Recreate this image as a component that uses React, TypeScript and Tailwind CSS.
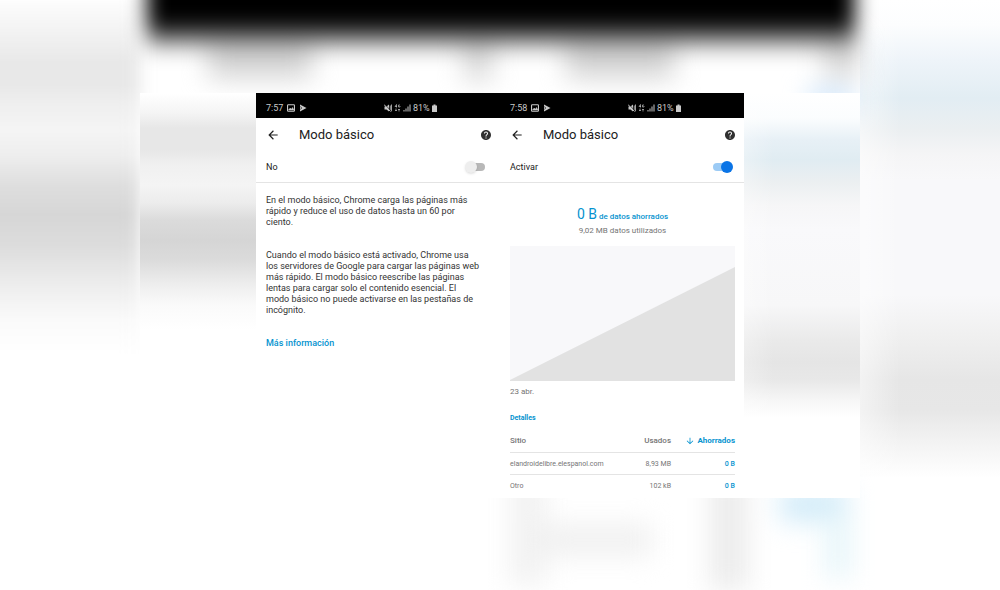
import type { ReactNode } from "react";
import { MdArrowBack, MdArrowDownward, MdHelp } from "react-icons/md";

type Stop = [number, string];

const leftEdge: Stop[] = [
  [0, "#fdfdfd"], [30, "#f3f3f3"], [62, "#e8e8e8"], [85, "#e8e8e8"], [105, "#efefef"], [130, "#f4f4f4"],
  [155, "#eeeeee"], [185, "#dedede"], [215, "#d6d6d6"], [245, "#dcdcdc"], [285, "#ededed"], [320, "#fafafa"], [355, "#ffffff"],
];
const leftPanel: Stop[] = [
  [93, "#ffffff"], [112, "#f5f5f5"], [128, "#e7e7e7"], [150, "#e7e7e7"], [165, "#f0f0f0"], [185, "#f4f4f4"],
  [203, "#ececec"], [220, "#dbdbdb"], [240, "#d5d5d5"], [260, "#dbdbdb"], [285, "#eeeeee"], [305, "#fafafa"], [330, "#ffffff"],
];
const rightEdge: Stop[] = [
  [0, "#ffffff"], [25, "#fcfdfe"], [60, "#eef4f9"], [98, "#e2edf3"], [130, "#ebeff1"], [155, "#f5f5f6"], [180, "#f8f8fa"],
  [295, "#f8f8fa"], [335, "#f0f0f0"], [380, "#e6e6e6"], [410, "#e7e7e7"], [440, "#f2f2f2"], [478, "#ffffff"],
];
const rightPanel: Stop[] = [
  [93, "#ffffff"], [118, "#fbfdfe"], [140, "#e7f0f6"], [160, "#e0ecf2"], [182, "#ebeff1"], [205, "#f6f6f7"], [230, "#f9f9fb"],
  [305, "#f7f7f8"], [340, "#eaeaea"], [362, "#e5e5e5"], [380, "#e8e8e8"], [400, "#f6f6f6"], [418, "#ffffff"],
];

function VerticalFade({ id, stops }: { id: string; stops: Stop[] }) {
  return (
    <linearGradient id={id} gradientUnits="userSpaceOnUse" x1="0" y1="0" x2="0" y2="590">
      {stops.map(([y, color]) => (
        <stop key={y} offset={y / 590} stopColor={color} />
      ))}
    </linearGradient>
  );
}

function Backdrop() {
  return (
    <svg aria-hidden="true" className="absolute inset-0 h-full w-full" viewBox="0 0 1000 590" preserveAspectRatio="none">
      <defs>
        <VerticalFade id="leftEdge" stops={leftEdge} />
        <VerticalFade id="leftPanel" stops={leftPanel} />
        <VerticalFade id="rightEdge" stops={rightEdge} />
        <VerticalFade id="rightPanel" stops={rightPanel} />
        <linearGradient id="sideFade">
          <stop offset="0" stopColor="#fff" />
          <stop offset="1" stopColor="#fff" stopOpacity="0" />
        </linearGradient>
        <filter id="soft" filterUnits="userSpaceOnUse" x="-60" y="-80" width="1120" height="740" colorInterpolationFilters="sRGB">
          <feGaussianBlur stdDeviation="13" />
        </filter>
        <filter id="edge" filterUnits="userSpaceOnUse" x="-60" y="-80" width="1120" height="740" colorInterpolationFilters="sRGB">
          <feGaussianBlur stdDeviation="8 1" />
        </filter>
        <filter id="bar" filterUnits="userSpaceOnUse" x="60" y="-140" width="880" height="300" colorInterpolationFilters="sRGB">
          <feGaussianBlur stdDeviation="10 14" />
        </filter>
      </defs>
      <rect width="1000" height="590" fill="#fff" />
      <rect x="-40" y="0" width="180" height="590" fill="url(#leftEdge)" filter="url(#edge)" />
      <rect x="860" y="0" width="140" height="590" fill="url(#rightEdge)" />
      <rect x="860" y="0" width="40" height="590" fill="url(#sideFade)" opacity="0.5" />
      <g filter="url(#soft)">
        <rect x="208" y="40" width="104" height="38" fill="#d4d4d4" />
        <rect x="464" y="40" width="28" height="40" fill="#d8d8d8" />
        <rect x="566" y="40" width="108" height="38" fill="#d4d4d4" />
        <rect x="824" y="40" width="34" height="38" fill="#d8d8d8" />
        <rect x="808" y="90" width="46" height="16" fill="#c4e0fb" />
        <rect x="510" y="470" width="36" height="115" fill="#f2f2f2" />
        <rect x="530" y="523" width="122" height="34" fill="#f1f1f1" />
        <rect x="710" y="470" width="38" height="120" fill="#ececec" />
        <rect x="780" y="488" width="68" height="34" fill="#d3ecf9" />
        <rect x="824" y="512" width="28" height="66" fill="#e8f6fa" />
      </g>
      <rect x="147" y="-120" width="708" height="158" fill="#000" filter="url(#bar)" />
      <rect x="140" y="93" width="720" height="405" fill="#fff" />
      <rect x="140" y="93" width="116" height="405" fill="url(#leftPanel)" />
      <rect x="744" y="93" width="116" height="405" fill="url(#rightPanel)" />
      <rect x="744" y="93" width="30" height="405" fill="url(#sideFade)" opacity="0.3" />
    </svg>
  );
}

function StatusBar({ time }: { time: string }) {
  return (
    <div className="flex h-[25px] items-center bg-black pt-1 pl-2.5 text-[9px] leading-3 text-[#c9c9c9]">
      <div className="flex w-[118px] items-center gap-1">
        <span>{time}</span>
        <svg className="size-2" viewBox="0 0 16 16" fill="none" stroke="currentColor" strokeWidth="2.2" aria-hidden="true">
          <rect x="1.1" y="1.5" width="13.8" height="13" rx="1.5" />
          <path d="M3 12l3.5-4 2.5 2.5L11 7l3 5z" fill="currentColor" strokeWidth="1" />
        </svg>
        <svg className="size-2" viewBox="0 0 16 16" aria-hidden="true">
          <path d="M2 1l13 7-13 7z" fill="currentColor" />
          <path d="M2 5l4 3-4 3" stroke="#000" strokeWidth="1" fill="none" />
        </svg>
      </div>
      <div className="flex items-center gap-0.5">
        <svg className="size-2" viewBox="0 0 16 16" aria-hidden="true">
          <path d="M1 5h4l5-4v14l-5-4H1z" fill="currentColor" />
          <path d="M12.5 3v10M15 1v14" stroke="currentColor" strokeWidth="1.6" />
          <path d="M2 1l13 14" stroke="#000" strokeWidth="1.5" />
          <path d="M0 1l13 14" stroke="currentColor" strokeWidth="2" />
        </svg>
        <svg className="h-2 w-[7px]" viewBox="0 0 14 16" fill="none" stroke="currentColor" strokeWidth="1.3" aria-hidden="true">
          <path d="M5 7V1L2 5h4M12 2H9v4h3V4M4 9v5M2 12l2 2 2-2M10 15v-5M8 12l2-2 2 2" />
        </svg>
        <svg className="size-2" viewBox="0 0 16 16" fill="currentColor" aria-hidden="true">
          <path d="M1 12h2v3H1zM5 9h2v6H5zM9 5h2v10H9zM13 1h2v14h-2z" />
        </svg>
        <span>81%</span>
        <svg className="h-2 w-[5px]" viewBox="0 0 10 16" fill="currentColor" aria-hidden="true">
          <path d="M3 1h4v2h3v13H0V3h3z" />
        </svg>
      </div>
    </div>
  );
}

function Phone({ time, label, on, children }: { time: string; label: string; on: boolean; children: ReactNode }) {
  return (
    <section className="bg-white">
      <StatusBar time={time} />
      <header className="flex h-[34px] items-center pr-2 pl-2.5">
        <button type="button" aria-label="Atrás" className="mr-[19px]">
          <MdArrowBack className="size-3.5" />
        </button>
        <h1 className="flex-1 text-[13px] leading-4">Modo básico</h1>
        <button type="button" aria-label="Ayuda">
          <MdHelp className="size-3 text-[#303030]" />
        </button>
      </header>
      <label className="flex h-[31px] items-center justify-between border-b border-[#e4e4e4] pr-[15px] pl-2.5 text-[9px] leading-3">
        {label}
        <input
          type="checkbox"
          role="switch"
          defaultChecked={on}
          className="relative h-2 w-4 appearance-none rounded-full bg-[#b8b8b8] before:absolute before:-top-0.5 before:-left-1 before:size-3 before:rounded-full before:bg-[#eeeeee] before:shadow-sm checked:bg-[#9ccbf5] checked:before:left-2 checked:before:bg-[#0a74e6] checked:before:shadow-none"
        />
      </label>
      <div className="pr-[9px] pl-2.5">{children}</div>
    </section>
  );
}

const sites = [
  { name: "elandroidelibre.elespanol.com", used: "8,93 MB", saved: "0 B" },
  { name: "Otro", used: "102 kB", saved: "0 B" },
];

export default function App() {
  return (
    <main className="relative min-h-screen bg-white font-[Roboto,sans-serif] text-[#212121]">
      <Backdrop />
      <div className="relative mx-auto grid max-w-[488px] grid-cols-2 pt-[93px]">
        <Phone time="7:57" label="No" on={false}>
          <div className="pt-3 text-[9px] leading-[11px] text-[#333333]">
            <p>
              En el modo básico, Chrome carga las páginas más
              <br />
              rápido y reduce el uso de datos hasta un 60 por
              <br />
              ciento.
            </p>
            <p className="mt-[22px]">
              Cuando el modo básico está activado, Chrome usa
              <br />
              los servidores de Google para cargar las páginas web
              <br />
              más rápido. El modo básico reescribe las páginas
              <br />
              lentas para cargar solo el contenido esencial. El
              <br />
              modo básico no puede activarse en las pestañas de
              <br />
              incógnito.
            </p>
            <a href="#mas-informacion" className="mt-[22px] inline-block font-medium text-[#0593cf]">
              Más información
            </a>
          </div>
        </Phone>
        <Phone time="7:58" label="Activar" on>
          <div className="pt-[23px] text-center">
            <p className="h-4 text-[8px] leading-4 font-medium text-[#0593cf]">
              <span className="text-[14px] font-normal">0 B</span> de datos ahorrados
            </p>
            <p className="mt-[3px] text-[8px] leading-3 text-[#757575]">9,02 MB datos utilizados</p>
          </div>
          <svg className="mt-[9px] block h-[135px] w-full bg-[#f8f8fa]" viewBox="0 0 225 135" preserveAspectRatio="none" role="img" aria-label="Datos utilizados">
            <path d="M0 134L225 21v114H0z" fill="#e2e2e2" />
          </svg>
          <p className="mt-[5px] text-[8px] leading-3 text-[#757575]">23 abr.</p>
          <h2 className="mt-3.5 text-[7px] leading-3 font-bold text-[#0593cf]">Detalles</h2>
          <div className="pt-1.5 pb-0.5">
            <table className="w-full text-[7px] leading-3 text-[#757575]">
              <thead>
                <tr className="h-[22px] border-b border-[#e4e4e4] text-[8px]">
                  <th scope="col" className="text-left font-medium">Sitio</th>
                  <th scope="col" className="text-right font-medium">Usados</th>
                  <th scope="col" className="w-16 font-bold text-[#0593cf]">
                    <button type="button" className="ml-auto flex items-center gap-0.5">
                      <MdArrowDownward className="size-2.5" />
                      Ahorrados
                    </button>
                  </th>
                </tr>
              </thead>
              <tbody>
                {sites.map((site) => (
                  <tr key={site.name} className="h-[22px] border-b border-[#e4e4e4] last:border-0">
                    <td className="pt-0.5">{site.name}</td>
                    <td className="pt-0.5 text-right">{site.used}</td>
                    <td className="pt-0.5 text-right font-medium text-[#0593cf]">{site.saved}</td>
                  </tr>
                ))}
              </tbody>
            </table>
          </div>
        </Phone>
      </div>
    </main>
  );
}
